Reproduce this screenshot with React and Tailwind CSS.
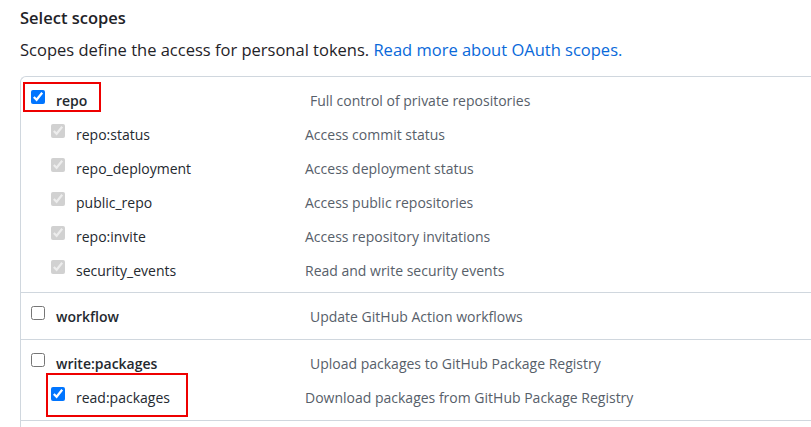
import React from "react";

const font = { fontFamily: '"Segoe UI", "Open Sans", sans-serif' };

function Box({ checked, disabled }) {
  return (
    <input
      type="checkbox"
      defaultChecked={checked}
      disabled={disabled}
      className="m-0 mb-[6px] h-[14px] w-[14px] shrink-0 accent-[#0075ff]"
    />
  );
}

function MainRow({ name, desc, checked, children }) {
  return (
    <div className="relative flex h-[34px] items-center">
      <div className="flex w-[289px] items-center pl-[10px]">
        <Box checked={checked} />
        <span className="ml-[11px] text-[14px] font-semibold text-[#24292f]">{name}</span>
      </div>
      <span className="text-[14px] text-[#57606a]">{desc}</span>
      {children}
    </div>
  );
}

function SubRow({ name, desc, checked, disabled, children }) {
  return (
    <div className="relative flex h-[34px] items-center">
      <div className="flex w-[284px] items-center pl-[30px]">
        <Box checked={checked} disabled={disabled} />
        <span className="ml-[11px] text-[14px] text-[#24292f]">{name}</span>
      </div>
      <span className="text-[14px] text-[#57606a]">{desc}</span>
      {children}
    </div>
  );
}

export default function App() {
  return (
    <div className="h-[427px] w-[811px] overflow-hidden bg-white pl-[20px]" style={font}>
      <h3 className="pt-[6px] text-[16.5px] font-semibold leading-[24px] text-[#1f2328]">Select scopes</h3>
      <p className="mt-[8px] text-[16.5px] leading-[24px] text-[#1f2328]">
        Scopes define the access for personal tokens.{" "}
        <a className="text-[#0969da]">Read more about OAuth scopes.</a>
      </p>
      <div className="mt-[14px] w-[830px] rounded-tl-[6px] border-l border-t border-[#d0d7de]">
        <div className="border-b border-[#d0d7de] pb-[5px] pt-[6px]">
          <MainRow name="repo" desc="Full control of private repositories" checked>
            <div className="absolute left-[2px] top-[-1px] h-[30px] w-[78px] border-2 border-[#ee0000]" />
          </MainRow>
          <SubRow name="repo:status" desc="Access commit status" checked disabled />
          <SubRow name="repo_deployment" desc="Access deployment status" checked disabled />
          <SubRow name="public_repo" desc="Access public repositories" checked disabled />
          <SubRow name="repo:invite" desc="Access repository invitations" checked disabled />
          <SubRow name="security_events" desc="Read and write security events" checked disabled />
        </div>
        <div className="border-b border-[#d0d7de] py-[6px]">
          <MainRow name="workflow" desc="Update GitHub Action workflows" />
        </div>
        <div className="border-b border-[#d0d7de] py-[6px]">
          <MainRow name="write:packages" desc="Upload packages to GitHub Package Registry" />
          <SubRow name="read:packages" desc="Download packages from GitHub Package Registry" checked>
            <div className="absolute left-[25px] top-[-7px] h-[44px] w-[142px] border-2 border-[#ee0000]" />
          </SubRow>
        </div>
        <div className="h-[40px]" />
      </div>
    </div>
  );
}
